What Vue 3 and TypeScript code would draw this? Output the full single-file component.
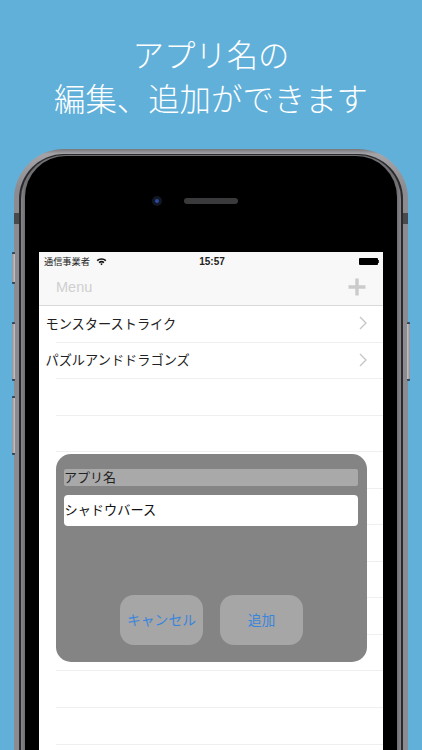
<script setup lang="ts">
const rows: string[] = ['モンスターストライク', 'パズルアンドドラゴンズ', '', '', '', '', '', '', '', '', '', '', '']
</script>

<template>
  <div class="page">
    <h1 class="headline">アプリ名の<br />編集、追加ができます</h1>
    <div class="phone">
      <i class="side mute"></i>
      <i class="side vol-up"></i>
      <i class="side vol-down"></i>
      <i class="side power"></i>
      <i class="band band-l"></i>
      <i class="band band-r"></i>
      <div class="rim">
        <div class="rim-inner">
          <div class="face">
            <div class="earpiece">
              <span class="camera"><span class="lens"></span></span>
              <span class="speaker"></span>
            </div>
            <div class="screen">
              <div class="status">
                <div class="carrier">
                  <span>通信事業者</span>
                  <svg width="11" height="9" viewBox="0 0 11 9">
                    <path d="M0.6 3.1 A7.2 7.2 0 0 1 10.4 3.1 L9.3 4.3 A5.6 5.6 0 0 0 1.7 4.3 Z" fill="#111" />
                    <path d="M2.5 5 A4.6 4.6 0 0 1 8.5 5 L7.4 6.2 A3 3 0 0 0 3.6 6.2 Z" fill="#111" />
                    <path d="M4.3 6.9 A1.8 1.8 0 0 1 6.7 6.9 L5.5 8.3 Z" fill="#111" />
                  </svg>
                </div>
                <span class="time">15:57</span>
                <div class="battery"><span class="cell"></span><span class="nub"></span></div>
              </div>
              <div class="nav">
                <span class="nav-title">Menu</span>
                <svg class="plus" width="18" height="18" viewBox="0 0 18 18">
                  <path d="M9 0.5V17.5M0.5 9H17.5" stroke="#cbcbcb" stroke-width="3.4" />
                </svg>
              </div>
              <div class="list">
                <div v-for="(row, i) in rows" :key="i" class="row">
                  <span class="row-text">{{ row }}</span>
                  <svg v-if="row" class="chevron" width="8" height="14" viewBox="0 0 8 14">
                    <path d="M1 1L7 7L1 13" fill="none" stroke="#c4c4c8" stroke-width="1.3" />
                  </svg>
                </div>
              </div>
              <div class="dialog">
                <div class="field-label">アプリ名</div>
                <div class="field-input">シャドウバース</div>
                <div class="actions">
                  <button class="action" type="button">キャンセル</button>
                  <button class="action" type="button">追加</button>
                </div>
              </div>
            </div>
          </div>
        </div>
      </div>
    </div>
  </div>
</template>

<style>
html, body { margin: 0; background: #60b0da; }
</style>

<style scoped>
.page {
  width: 422px;
  height: 750px;
  overflow: hidden;
  background: #60b0da;
  padding-top: 32px;
  box-sizing: border-box;
  font-family: "Noto Sans CJK JP", "Noto Sans", sans-serif;
}
.headline {
  margin: 0 0 29px;
  color: #fff;
  font-size: 31.4px;
  font-weight: 300;
  line-height: 44px;
  text-align: center;
  white-space: nowrap;
}
.phone {
  position: relative;
  width: 394px;
  height: 620px;
  margin-left: 14px;
  padding: 5px 5px 0;
  box-sizing: border-box;
  border-radius: 50px 50px 0 0;
  background: linear-gradient(180deg, #77777b 0, #a4a4a8 5px, #8c8c90 40px);
}
.rim {
  height: 100%;
  padding: 1px 2px 0;
  box-sizing: border-box;
  border-radius: 45px 45px 0 0;
  background: #2a2a2c;
}
.rim-inner {
  height: 100%;
  padding: 1px 4px 0;
  box-sizing: border-box;
  border-radius: 44px 44px 0 0;
  background: linear-gradient(90deg, #85858a 0, #6f6f74 4px, #6f6f74 calc(100% - 4px), #85858a 100%);
}
.face {
  height: 100%;
  padding: 0 14px;
  box-sizing: border-box;
  border-radius: 41px 41px 0 0;
  background: #000;
}
.earpiece {
  display: flex;
  align-items: center;
  gap: 22px;
  height: 96px;
  box-sizing: border-box;
  padding: 0 0 6px 113px;
}
.camera {
  display: flex;
  align-items: center;
  justify-content: center;
  width: 10px;
  height: 10px;
  border-radius: 50%;
  background: #121725;
}
.lens {
  width: 4px;
  height: 4px;
  border-radius: 50%;
  background: #2b4a9e;
}
.speaker {
  width: 54px;
  height: 6px;
  border-radius: 3px;
  background: #3a3a3c;
}
.screen {
  position: relative;
  width: 344px;
  height: 498px;
  overflow: hidden;
  background: #fff;
}
.status {
  display: grid;
  grid-template-columns: 1fr auto 1fr;
  align-items: center;
  height: 18px;
  padding: 0 4px 0 5px;
  background: #f8f8f8;
  color: #222;
}
.carrier {
  display: flex;
  align-items: center;
  gap: 6px;
  font-size: 9.2px;
}
.time {
  margin-left: 1px;
  font-family: "Liberation Sans", sans-serif;
  font-size: 10px;
  font-weight: 700;
  color: #222;
}
.battery {
  display: flex;
  align-items: center;
  justify-content: flex-end;
}
.cell {
  width: 19px;
  height: 7px;
  border-radius: 1px;
  background: #000;
}
.nub {
  width: 1.5px;
  height: 3px;
  background: #333;
}
.nav {
  display: flex;
  align-items: center;
  justify-content: space-between;
  height: 36px;
  padding: 0 17px 1px;
  box-sizing: border-box;
  background: #f8f8f8;
  border-bottom: 1px solid #d9d9d9;
}
.nav-title {
  font-family: "Liberation Sans", sans-serif;
  font-size: 14.5px;
  color: #cfcfcf;
}
.plus {
  margin-bottom: 1px;
}
.row {
  display: flex;
  align-items: center;
  justify-content: space-between;
  height: 36.55px;
  margin-left: 17px;
  padding-right: 16px;
  padding-bottom: 1px;
  box-sizing: border-box;
  border-bottom: 1px solid #efefef;
}
.row-text {
  margin-left: -10.5px;
  font-size: 13.2px;
  color: #222;
  white-space: nowrap;
}
.dialog {
  position: absolute;
  left: 17px;
  top: 202px;
  display: flex;
  flex-direction: column;
  width: 311px;
  height: 208px;
  padding: 15px 8px 17px;
  box-sizing: border-box;
  border-radius: 15px;
  background: #848484;
}
.field-label {
  height: 17px;
  margin-right: 1px;
  border-radius: 2px;
  background: #a9a9a9;
  color: #222;
  font-size: 13px;
  line-height: 15px;
}
.field-input {
  height: 31px;
  margin-top: 9px;
  margin-right: 1px;
  padding-left: 0.5px;
  border-radius: 4px;
  background: #fff;
  color: #111;
  font-size: 13.2px;
  line-height: 29px;
}
.actions {
  display: flex;
  justify-content: center;
  gap: 17px;
  margin-top: auto;
}
.action {
  width: 83px;
  height: 50px;
  padding: 0 0 2px;
  border: 0;
  border-radius: 14px;
  background: #a6a6a6;
  color: #3a85dc;
  font-family: inherit;
  font-size: 13.8px;
}
.side {
  position: absolute;
  width: 3px;
  box-sizing: border-box;
  border-radius: 1px;
  border-top: 2px solid #3a4452;
  border-bottom: 2px solid #3a4452;
  background: linear-gradient(90deg, #8f8f94, #c6c6ca);
}
.mute { left: -2px; top: 103px; height: 32px; }
.vol-up { left: -2px; top: 173px; height: 59px; }
.vol-down { left: -2px; top: 247px; height: 59px; }
.power { right: -2px; top: 173px; height: 59px; background: linear-gradient(90deg, #c6c6ca, #8f8f94); }
.band {
  position: absolute;
  top: 64px;
  width: 5px;
  height: 11px;
  background: #4a4a4d;
}
.band-l { left: 0; }
.band-r { right: 0; }
</style>
